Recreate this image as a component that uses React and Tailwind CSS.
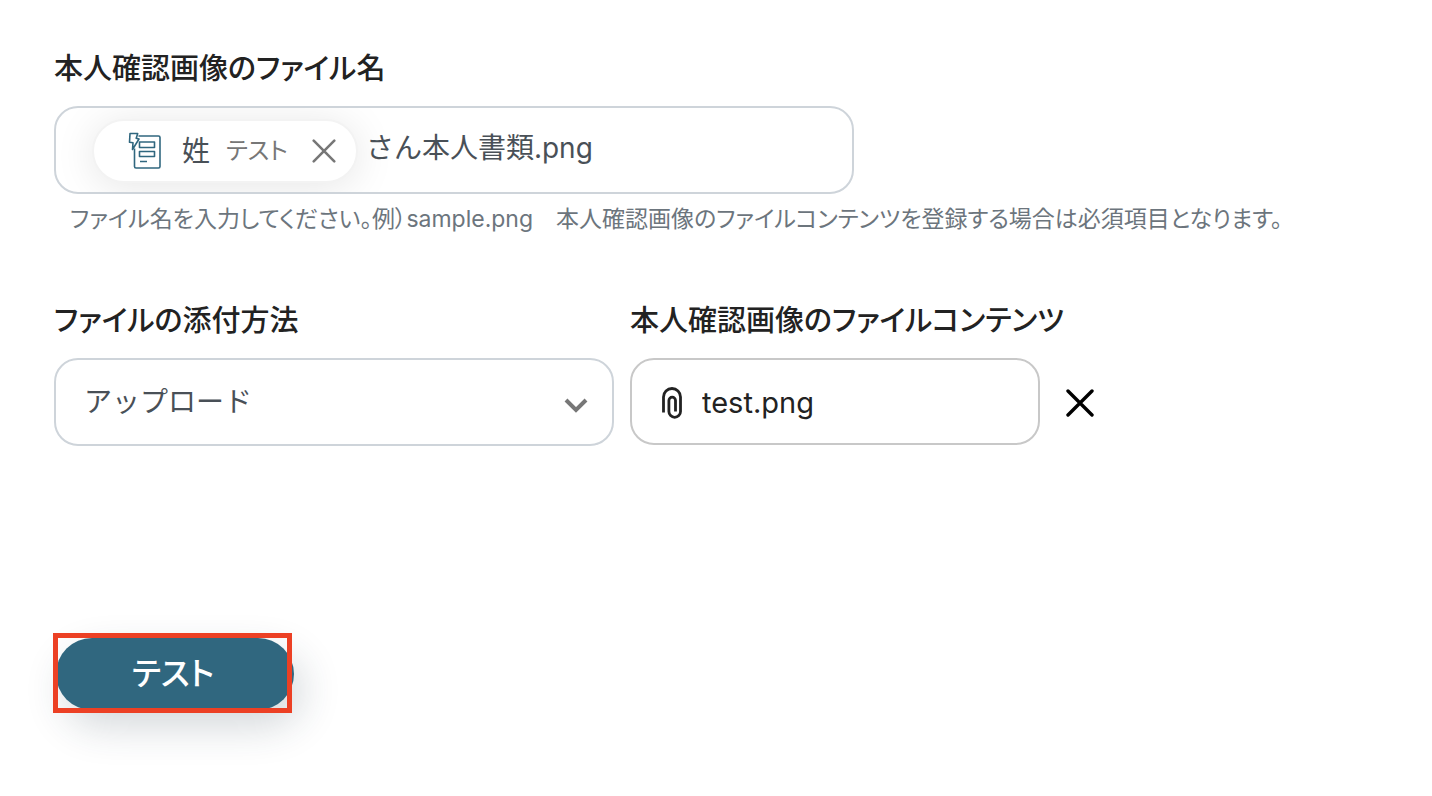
import React, { useState } from 'react';

const Label = ({ htmlFor, children }) => (
  <label htmlFor={htmlFor} className="block text-[29px] leading-10 font-medium text-[#222] whitespace-nowrap">
    {children}
  </label>
);

const RecordIcon = () => (
  <svg viewBox="0 0 34 38" className="w-[34px] h-[38px] shrink-0" fill="none" stroke="#30677f" strokeWidth="1.6" strokeLinejoin="round" aria-hidden="true">
    <path d="M10.5 4H30.5a1.5 1.5 0 0 1 1.5 1.5V34.5a1.5 1.5 0 0 1-1.5 1.5H8a1.5 1.5 0 0 1-1.5-1.5V16.5" />
    <path d="M2 1.5H9.7L8.2 6.2L11 7L4.5 17.5L5 10.7L1.5 10.2Z" />
    <path d="M11.5 10H26.5V15.5H11.5ZM11.5 19.5H26.5V24.5H11.5ZM12 29.5H19" />
  </svg>
);

const CloseIcon = ({ className, strokeWidth }) => (
  <svg viewBox="0 0 28 28" className={className} fill="none" stroke="currentColor" strokeWidth={strokeWidth} strokeLinecap="round" aria-hidden="true">
    <path d="M2 2L26 26M26 2L2 26" />
  </svg>
);

const ClipIcon = () => (
  <svg viewBox="0 0 20 32" className="w-5 h-8 shrink-0" fill="none" stroke="#222" strokeWidth="2.8" aria-hidden="true">
    <path d="M1.5 25.5V10A8.5 8.5 0 0 1 18.5 10V24.5A5.8 5.8 0 0 1 6.9 24.5V13.5A3.3 3.3 0 0 1 13.5 13.5V24.5" />
  </svg>
);

export default function App() {
  const [suffix, setSuffix] = useState('さん本人書類.png');
  const [method, setMethod] = useState('upload');

  return (
    <main className="px-[54px] pt-[49px] pb-20 font-['Inter','Noto_Sans_CJK_JP',sans-serif] [font-feature-settings:'palt'] text-[#495057]" lang="ja">
      <Label htmlFor="file-name">本人確認画像のファイル名</Label>
      <div className="mt-[17px] flex items-center w-[800px] max-w-full h-[88px] pt-0.5 pl-9 pr-6 rounded-3xl border-2 border-[#ced4da] overflow-hidden">
        <div className="flex items-center shrink-0 h-16 pl-[34px] pr-4 rounded-full border-2 border-[#f3f3f3] bg-white shadow-[0_4px_40px_rgba(0,0,0,0.1)]">
          <RecordIcon />
          <span className="ml-5 text-[28px] leading-10">姓</span>
          <span className="ml-4 text-[24px] leading-10 text-[#777]">テスト</span>
          <button type="button" aria-label="姓を削除" className="ml-5 p-1 text-[#777]">
            <CloseIcon className="w-6 h-6" strokeWidth="3" />
          </button>
        </div>
        <input
          id="file-name"
          value={suffix}
          onChange={(e) => setSuffix(e.target.value)}
          className="ml-2 mb-1.5 flex-1 min-w-0 h-10 text-[28px] [font-feature-settings:normal] bg-transparent outline-none"
        />
      </div>
      <p className="mt-[9px] ml-4 text-[23px] leading-8 text-[#6c757d] whitespace-nowrap">
        ファイル名を入力してください。例）sample.png　本人確認画像のファイルコンテンツを登録する場合は必須項目となります。
      </p>

      <div className="mt-[66px] flex items-start gap-4">
        <div className="w-[560px]">
          <Label htmlFor="method">ファイルの添付方法</Label>
          <div className="relative mt-[17px]">
            <select
              id="method"
              value={method}
              onChange={(e) => setMethod(e.target.value)}
              className="appearance-none w-full h-[88px] px-7 rounded-3xl border-2 border-[#ced4da] bg-white text-[28px] [font-feature-settings:normal] outline-none"
            >
              <option value="upload">アップロード</option>
            </select>
            <svg viewBox="0 0 24 16" className="absolute right-[26px] top-10 w-6 h-4 pointer-events-none" fill="none" stroke="#777" strokeWidth="4" aria-hidden="true">
              <path d="M2 2L12 12L22 2" />
            </svg>
          </div>
        </div>

        <div>
          <Label htmlFor="content">本人確認画像のファイルコンテンツ</Label>
          <div className="mt-[17px] flex items-center gap-[26px]">
            <div className="flex items-center gap-5 w-[410px] h-[87px] pt-0.5 px-[30px] rounded-3xl border-2 border-[#c8c8c8]">
              <ClipIcon />
              <input id="content" readOnly value="test.png" className="flex-1 min-w-0 h-10 text-[29px] text-[#222] bg-transparent outline-none" />
            </div>
            <button type="button" aria-label="ファイルを削除" className="pt-0.5 text-black">
              <CloseIcon className="w-7 h-7" strokeWidth="3.4" />
            </button>
          </div>
        </div>
      </div>

      <div className="relative mt-[192px] ml-0.5 w-[238px]">
        <button type="button" className="w-full h-[72px] pr-1 rounded-full bg-[#30677f] text-white text-[32px] leading-10 font-medium shadow-[8px_16px_40px_rgba(33,53,71,0.2)]">
          テスト
        </button>
        <div className="absolute -left-[3px] -top-[5px] w-[239px] h-20 border-[5px] border-[#ec4024] pointer-events-none" />
      </div>
    </main>
  );
}
